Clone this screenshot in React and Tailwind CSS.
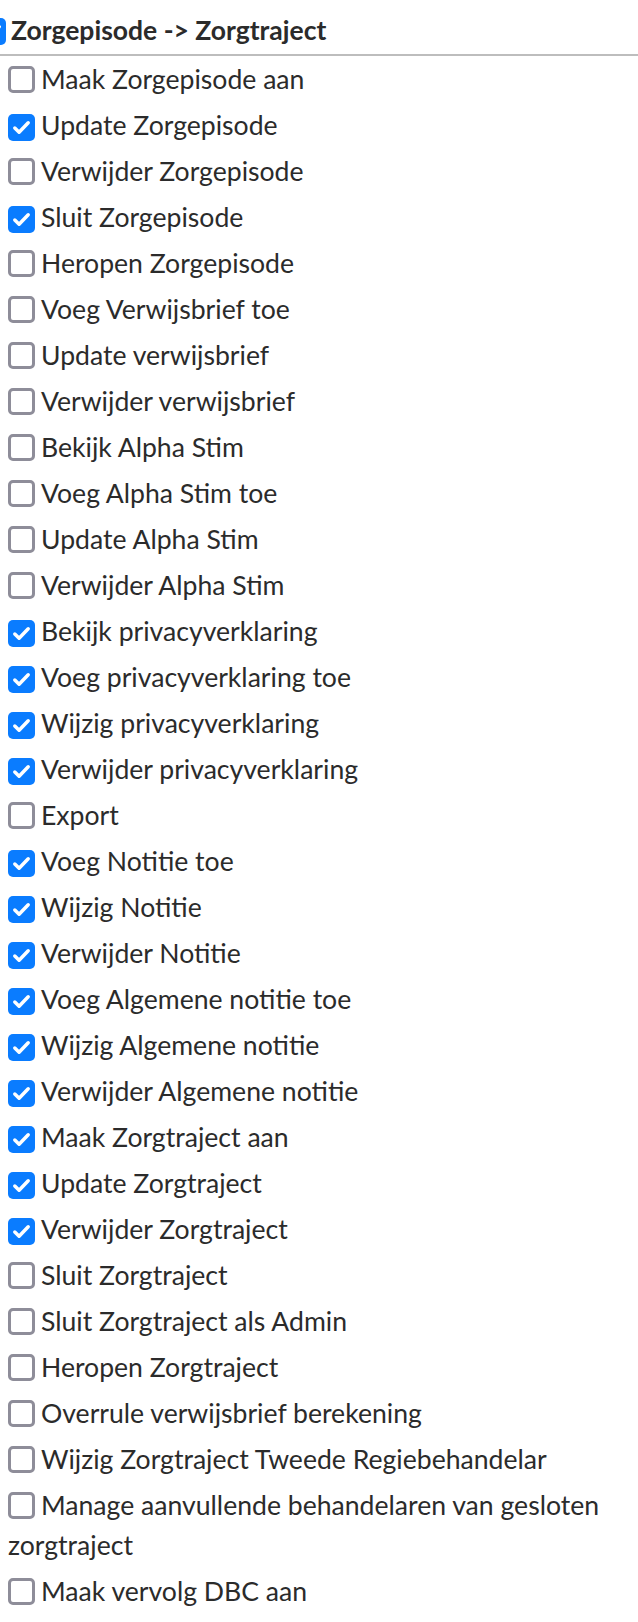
const ITEMS = [
  ["Maak Zorgepisode aan", false],
  ["Update Zorgepisode", true],
  ["Verwijder Zorgepisode", false],
  ["Sluit Zorgepisode", true],
  ["Heropen Zorgepisode", false],
  ["Voeg Verwijsbrief toe", false],
  ["Update verwijsbrief", false],
  ["Verwijder verwijsbrief", false],
  ["Bekijk Alpha Stim", false],
  ["Voeg Alpha Stim toe", false],
  ["Update Alpha Stim", false],
  ["Verwijder Alpha Stim", false],
  ["Bekijk privacyverklaring", true],
  ["Voeg privacyverklaring toe", true],
  ["Wijzig privacyverklaring", true],
  ["Verwijder privacyverklaring", true],
  ["Export", false],
  ["Voeg Notitie toe", true],
  ["Wijzig Notitie", true],
  ["Verwijder Notitie", true],
  ["Voeg Algemene notitie toe", true],
  ["Wijzig Algemene notitie", true],
  ["Verwijder Algemene notitie", true],
  ["Maak Zorgtraject aan", true],
  ["Update Zorgtraject", true],
  ["Verwijder Zorgtraject", true],
  ["Sluit Zorgtraject", false],
  ["Sluit Zorgtraject als Admin", false],
  ["Heropen Zorgtraject", false],
  ["Overrule verwijsbrief berekening", false],
  ["Wijzig Zorgtraject Tweede Regiebehandelar", false],
  ["Manage aanvullende behandelaren van gesloten zorgtraject", false],
  ["Maak vervolg DBC aan", false],
];

const Box = ({ checked, className = "" }) =>
  checked ? (
    <span className={`inline-flex shrink-0 items-center justify-center w-[27px] h-[27px] rounded-[5px] bg-[#0a7cff] ${className}`}>
      <svg viewBox="0 0 24 24" className="w-[23px] h-[23px]" fill="none" stroke="white" strokeWidth="3.6" strokeLinecap="round" strokeLinejoin="round">
        <path d="M5 12.5l4.5 4.5L19 7" />
      </svg>
    </span>
  ) : (
    <span className={`inline-block shrink-0 w-[27px] h-[27px] rounded-[5px] border-[3px] border-[#8e8d99] bg-white ${className}`} />
  );

export default function App() {
  return (
    <div className="bg-white text-[#2b2b2b] font-['Lato',sans-serif] w-[638px]">
      <div className="flex items-center h-[54px] pt-[8px] -ml-[21px]">
        <Box checked className="mr-[5px]" />
        <span className="text-[26.5px] font-bold">Zorgepisode -&gt; Zorgtraject</span>
      </div>
      <div className="h-[2px] bg-[#bdbdbd]" />
      <div className="pt-[3px]">
        {ITEMS.map(([label, checked]) => (
          <label key={label} className="block pl-2 mb-[6px] text-[26.6px] leading-[40px]">
            <Box checked={checked} className="align-[-4px] mr-[6px]" />
            {label}
          </label>
        ))}
      </div>
    </div>
  );
}
